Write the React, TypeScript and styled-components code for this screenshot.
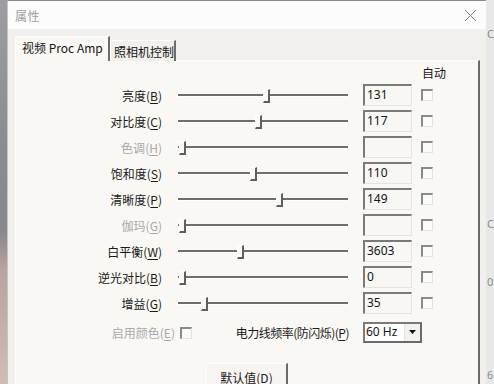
import React from "react";
import styled, { createGlobalStyle } from "styled-components";

const Global = createGlobalStyle`
  html, body { margin: 0; padding: 0; background: #e9e9e9; }
  body { font-family: "Noto Sans CJK SC", "Noto Sans", sans-serif; }
  * { box-sizing: border-box; }
`;

const Page = styled.div`
  display: flex;
  width: 494px;
  height: 384px;
  overflow: hidden;
`;

const LeftStrip = styled.div`
  width: 7px;
  flex: none;
  background: linear-gradient(to bottom, #9d9ea2 0%, #8b8d92 35%, #86888d 60%, #b9a29f 70%, #d3bbb6 100%);
`;

const RightStrip = styled.div`
  width: 8px;
  flex: none;
  background: #e8e8e8;
  display: flex;
  flex-direction: column;
  font-family: "Noto Sans", sans-serif;
  font-size: 11px;
  color: #8a8a8a;
  overflow: hidden;
`;

const OutGlyph = styled.span<{ $top: number }>`
  flex: none;
  margin-top: ${(p) => p.$top}px;
  margin-left: 1px;
  line-height: 12px;
  height: 12px;
`;

const Dialog = styled.div`
  width: 479px;
  flex: none;
  display: flex;
  flex-direction: column;
  background: #f1f0ec;
  border-left: 1px solid #c4c4c4;
  border-top: 1px solid #8a8a8a;
`;

const TitleBar = styled.div`
  height: 28px;
  flex: none;
  display: flex;
  align-items: center;
  justify-content: space-between;
  padding: 0 9px 0 7px;
  background: #fcfcfc;
`;

const Title = styled.span`
  font-size: 12px;
  color: #a0a0a0;
  letter-spacing: 0.5px;
`;

const Body = styled.div`
  flex: 1;
  display: flex;
  flex-direction: column;
  padding: 8px 6px 0 7px;
  min-height: 0;
`;

const TabRow = styled.div`
  display: flex;
  align-items: flex-end;
  height: 24px;
  flex: none;
  position: relative;
  z-index: 1;
  margin-bottom: -1px;
`;

const Tab = styled.div<{ $active?: boolean; $w: number }>`
  width: ${(p) => p.$w}px;
  height: ${(p) => (p.$active ? 25 : 21)}px;
  display: flex;
  align-items: center;
  padding-left: ${(p) => (p.$active ? 6 : 3)}px;
  font-size: 12px;
  color: #151515;
  white-space: nowrap;
  background: ${(p) => (p.$active ? "#f9f8f4" : "#f1f0ec")};
  border-top: 1px solid #fdfdfd;
  border-left: 1px solid #fdfdfd;
  border-right: 2px solid #6c6c6c;
  padding-bottom: ${(p) => (p.$active ? 3 : 0)}px;
`;

const Panel = styled.div`
  flex: 1;
  display: flex;
  flex-direction: column;
  background: #f9f8f4;
  border-top: 1px solid #fdfdfd;
  border-left: 1px solid #fdfdfd;
  border-right: 2px solid #6b6b6b;
  padding-top: 4px;
  min-height: 0;
`;

const AutoHeader = styled.div`
  height: 15px;
  padding-left: 406px;
  font-size: 12px;
  line-height: 15px;
  color: #151515;
  white-space: nowrap;
  margin-bottom: 4px;
`;

const Rows = styled.div`
  display: flex;
  flex-direction: column;
  gap: 4px;
`;

const Row = styled.div`
  display: flex;
  align-items: center;
  height: 22px;
`;

const Label = styled.div<{ $disabled?: boolean; $w?: number; $tight?: boolean }>`
  width: ${(p) => p.$w ?? 146}px;
  flex: none;
  text-align: right;
  font-size: 12px;
  white-space: nowrap;
  letter-spacing: ${(p) => (p.$tight ? "-0.5px" : "0")};
  color: ${(p) => (p.$disabled ? "#a9a9a9" : "#1a1a1a")};
  u { text-underline-offset: 2px; }
`;

const Slider = styled.div`
  position: relative;
  width: 170px;
  height: 22px;
  margin-left: 16px;
  flex: none;
`;

const Track = styled.div`
  margin-top: 10px;
  height: 3px;
  border-top: 2px solid #6e6e6e;
  border-bottom: 1px solid #fefefe;
`;

const Thumb = styled.div`
  position: absolute;
  top: 5px;
  width: 7px;
  height: 14px;
  background: #f9f8f4;
  border-top: 1px solid #fefefe;
  border-left: 1px solid #fefefe;
  border-right: 2px solid #5e5e5e;
  border-bottom: 2px solid #5e5e5e;
`;

const ValueBox = styled.div`
  width: 49px;
  height: 22px;
  margin-left: 15px;
  flex: none;
  background: #f8f7f3;
  border-top: 2px solid #7a7a7a;
  border-left: 2px solid #7a7a7a;
  border-right: 1px solid #e4e4e2;
  border-bottom: 1px solid #e4e4e2;
  font-family: "Noto Sans", sans-serif;
  font-size: 12px;
  line-height: 18px;
  padding-left: 2px;
  color: #151515;
`;

const Check = styled.div<{ $ml: number }>`
  width: 12px;
  height: 12px;
  flex: none;
  margin-left: ${(p) => p.$ml}px;
  background: #fbfbf9;
  border-top: 2px solid #8a8a8a;
  border-left: 2px solid #8a8a8a;
  border-right: 1px solid #e2e2e0;
  border-bottom: 1px solid #e2e2e0;
`;

const BottomRow = styled.div`
  display: flex;
  align-items: center;
  height: 21px;
  margin-top: 8px;
`;

const Select = styled.div`
  margin-left: 14px;
  width: 59px;
  height: 21px;
  flex: none;
  display: flex;
  border-top: 2px solid #7a7a7a;
  border-left: 2px solid #7a7a7a;
  border-right: 2px solid #6a6a6a;
  border-bottom: 2px solid #6a6a6a;
  background: #ffffff;
`;

const SelectText = styled.div`
  flex: 1;
  font-family: "Noto Sans", sans-serif;
  font-size: 12px;
  line-height: 16px;
  padding-left: 1px;
  color: #151515;
`;

const SelectArrow = styled.div`
  width: 16px;
  display: flex;
  align-items: center;
  justify-content: center;
  background: #f3f2ee;
  border-left: 1px solid #e4e4e4;
`;

const ButtonRow = styled.div`
  display: flex;
  justify-content: center;
  margin-top: 20px;
`;

const Button = styled.div`
  width: 82px;
  height: 26px;
  display: flex;
  align-items: center;
  justify-content: center;
  padding-top: 2px;
  font-size: 12px;
  color: #1a1a1a;
  background: #f6f5f1;
  border-top: 1px solid #fdfdfd;
  border-left: 1px solid #fdfdfd;
  border-right: 2px solid #6b6b6b;
`;

type RowData = { name: string; key: string; pos: number; value: string; disabled?: boolean };

const rows: RowData[] = [
  { name: "亮度", key: "B", pos: 85, value: "131" },
  { name: "对比度", key: "C", pos: 77, value: "117" },
  { name: "色调", key: "H", pos: 1, value: "", disabled: true },
  { name: "饱和度", key: "S", pos: 72, value: "110" },
  { name: "清晰度", key: "P", pos: 98, value: "149" },
  { name: "伽玛", key: "G", pos: 1, value: "", disabled: true },
  { name: "白平衡", key: "W", pos: 59, value: "3603" },
  { name: "逆光对比", key: "B", pos: 1, value: "0" },
  { name: "增益", key: "G", pos: 23, value: "35" },
];

const CloseIcon = () => (
  <svg width="13" height="13" viewBox="0 0 13 13">
    <path d="M1 1 L12 12 M12 1 L1 12" stroke="#7c7c7c" strokeWidth="1" fill="none" />
  </svg>
);

const ArrowDown = () => (
  <svg width="8" height="5" viewBox="0 0 8 5">
    <path d="M0 0 H7 L3.5 4 Z" fill="#111" />
  </svg>
);

export default function App() {
  return (
    <>
      <Global />
      <Page>
        <LeftStrip />
        <Dialog>
          <TitleBar>
            <Title>属性</Title>
            <CloseIcon />
          </TitleBar>
          <Body>
            <TabRow>
              <Tab $active $w={95}>视频 Proc Amp</Tab>
              <Tab $w={66}>照相机控制</Tab>
            </TabRow>
            <Panel>
              <AutoHeader>自动</AutoHeader>
              <Rows>
                {rows.map((r, i) => (
                  <Row key={i}>
                    <Label $disabled={r.disabled}>
                      {r.name}(<u>{r.key}</u>)
                    </Label>
                    <Slider>
                      <Track />
                      <Thumb style={{ left: r.pos }} />
                    </Slider>
                    <ValueBox>{r.value}</ValueBox>
                    <Check $ml={9} />
                  </Row>
                ))}
              </Rows>
              <BottomRow>
                <Label $disabled $w={159}>
                  启用颜色(<u>E</u>)
                </Label>
                <Check $ml={5} />
                <Label $w={157} $tight>
                  电力线频率(防闪烁)(<u>P</u>)
                </Label>
                <Select>
                  <SelectText>60 Hz</SelectText>
                  <SelectArrow>
                    <ArrowDown />
                  </SelectArrow>
                </Select>
              </BottomRow>
              <ButtonRow>
                <Button>
                  默认值(<u>D</u>)
                </Button>
              </ButtonRow>
            </Panel>
          </Body>
        </Dialog>
        <RightStrip>
          <OutGlyph $top={28}>C</OutGlyph>
          <OutGlyph $top={178}>C</OutGlyph>
          <OutGlyph $top={46}>0</OutGlyph>
          <OutGlyph $top={81}>6</OutGlyph>
        </RightStrip>
      </Page>
    </>
  );
}
